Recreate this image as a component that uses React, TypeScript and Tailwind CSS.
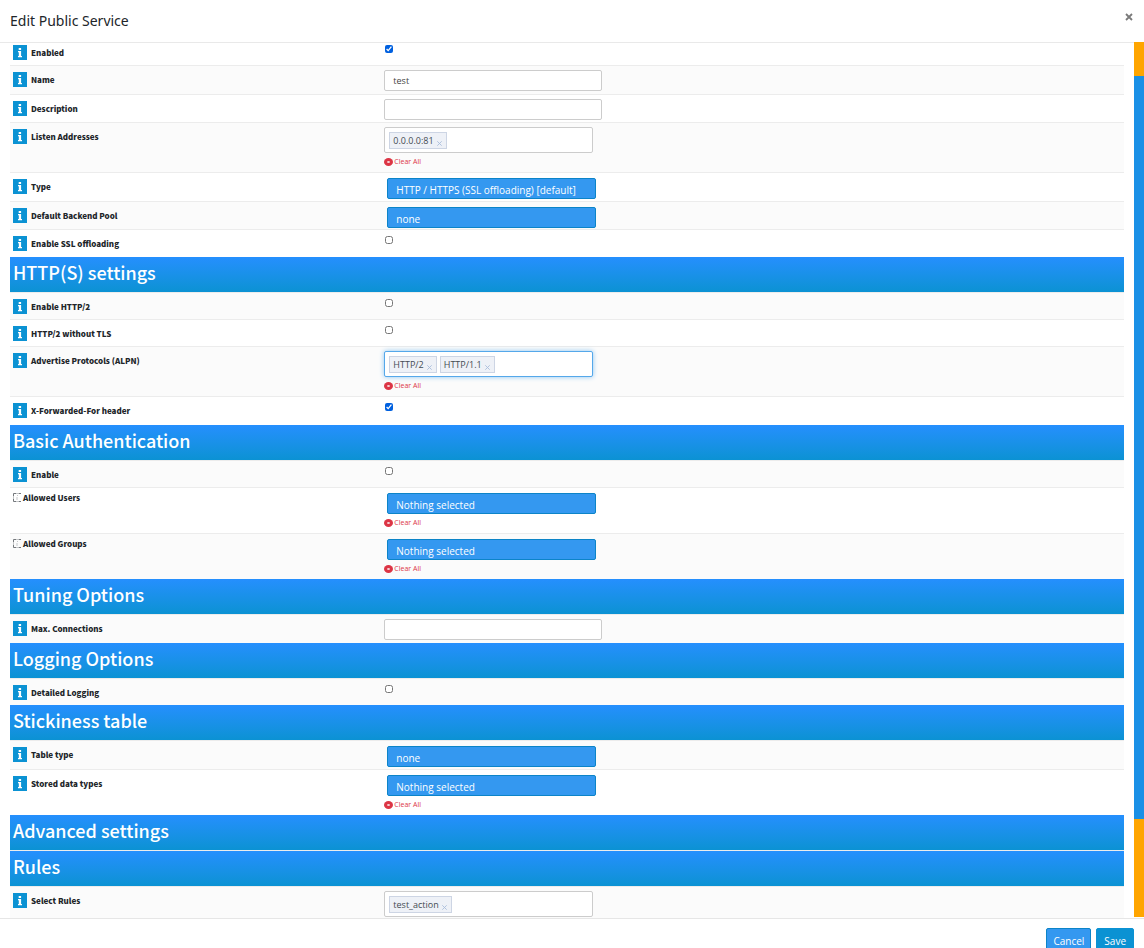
import React from "react";

const rowSizes = {
  xs: "min-h-[27px]",
  sm: "min-h-7",
  md: "min-h-[29px]",
  multi: "min-h-[46px]",
  lg: "min-h-[50px]",
};

function InfoBadge() {
  return (
    <svg viewBox="0 0 14 15" className="h-[15px] w-[14px] shrink-0" aria-hidden="true">
      <rect width="14" height="15" fill="#0b92d3" />
      <path fill="#fff" d="M5.700 3h2.400v2H5.700zM5 6h3.100v5H9v1.300H5V11h.8V7.300H5z" />
    </svg>
  );
}

function BrokenBadge() {
  return (
    <svg viewBox="0 0 8 9" className="mr-[2px] h-[9px] w-2 shrink-0" fill="none" aria-hidden="true">
      <path stroke="#74787c" d="M.5 3V.5H3M5.500 .5H8M.5 6v2.500H3M5.500 8.500H8" />
      <path stroke="#c4c6c8" d="M.5 3v3M3 .5h2.500M3 8.500h2.500M4.500 2v1M4 4v3" />
    </svg>
  );
}

type RowProps = {
  id: string;
  label: string;
  size: keyof typeof rowSizes;
  shade?: boolean;
  broken?: boolean;
  first?: boolean;
  children: React.ReactNode;
};

function Row({ id, label, size, shade, broken, first, children }: RowProps) {
  return (
    <div
      className={`grid shrink-0 grid-cols-[1fr_2fr] border-t border-[#ececec] ${rowSizes[size]} ${shade ? "bg-[#fbfbfb]" : "bg-white"} ${first ? "-mt-[5px]" : ""}`}
    >
      <div className={`flex items-start px-[3px] ${broken ? "pt-[5px]" : "gap-1 pt-1.5"}`}>
        {broken ? <BrokenBadge /> : <InfoBadge />}
        <label
          htmlFor={id}
          className={`font-['Noto_Sans_CJK_SC','Noto_Sans',sans-serif] text-[8px] font-black text-[#212529] ${broken ? "leading-[10px]" : "leading-[15px]"}`}
        >
          {label}
        </label>
      </div>
      <div className="px-[3px]">{children}</div>
    </div>
  );
}

function Section({ title, divided }: { title: string; divided?: boolean }) {
  return (
    <h2
      className={`h-[35px] shrink-0 bg-linear-to-b from-[#258ffe] to-[#0b92d3] bg-clip-padding pl-[3px] font-['Noto_Sans_CJK_SC','Noto_Sans',sans-serif] text-lg leading-[30px] font-medium text-white ${divided ? "box-content border-t border-[#ececec]" : ""}`}
    >
      {title}
    </h2>
  );
}

function Check({ id, checked }: { id: string; checked?: boolean }) {
  return (
    <input
      id={id}
      type="checkbox"
      defaultChecked={checked}
      className="mt-1.5 ml-px block size-2 accent-[#0060df]"
    />
  );
}

function TextField({ id, value }: { id: string; value?: string }) {
  return (
    <input
      id={id}
      type="text"
      defaultValue={value}
      className="mt-1 block h-[21px] w-[218px] rounded-[2px] border border-[#ccc] bg-white px-2 text-[9px] text-[#444]"
    />
  );
}

function Dropdown({ id, value }: { id: string; value: string }) {
  return (
    <select
      id={id}
      className="mt-[5px] ml-[3px] block h-[21px] w-[209px] appearance-none rounded-[2px] border border-[#0c84c8] bg-[#3498f0] px-2 pt-1 text-[10px] text-white"
    >
      <option>{value}</option>
    </select>
  );
}

function ClearAll() {
  return (
    <button type="button" className="mt-[3px] flex h-[11px] items-center gap-px text-[7px] leading-[11px] text-[#dc3545]">
      <svg viewBox="0 0 9 8" className="h-2 w-[9px]" aria-hidden="true">
        <ellipse cx="4.500" cy="4" rx="4.500" ry="4" fill="#dc3545" />
        <path d="M3.500 3l2 2M5.500 3l-2 2" stroke="#fff" strokeWidth="1" />
      </svg>
      Clear All
    </button>
  );
}

function Tokens({ id, values, focused }: { id: string; values: string[]; focused?: boolean }) {
  return (
    <div
      className={`mt-1 flex h-[26px] w-[209px] items-center gap-[3px] rounded-[2px] border bg-white px-1 ${focused ? "border-[#55a8ea] shadow-[0_0_5px_#8cc4f0]" : "border-[#ccc]"}`}
    >
      {values.map((v) => (
        <span
          key={v}
          className="flex h-[17px] items-center gap-[3px] border border-[#cdd5e4] bg-[#eef1f7] pr-1 pl-[3px] text-[9px] leading-[15px] text-[#444b52]"
        >
          {v}
          <button type="button" aria-label={`Remove ${v}`} className="pt-1.5">
            <svg viewBox="0 0 5 5" className="size-[5px]" stroke="#a9bddb" strokeWidth=".9" aria-hidden="true">
              <path d="M.3.3l4.400 4.400M4.700.3L.3 4.700" />
            </svg>
          </button>
        </span>
      ))}
      <input id={id} type="text" className="h-4 min-w-0 flex-1 bg-transparent text-[9px] outline-none" />
    </div>
  );
}

export default function App() {
  return (
    <div className="flex h-screen flex-col overflow-hidden bg-white font-['Open_Sans','Noto_Sans',sans-serif] text-[#212529]">
      <header className="flex h-[43px] shrink-0 items-start justify-between border-b border-[#e9e9e9] pr-[11px] pl-[10px]">
        <h1 className="pt-[11px] font-['Noto_Sans','Open_Sans',sans-serif] text-sm leading-5">Edit Public Service</h1>
        <button type="button" aria-label="Close" className="pt-[13px]">
          <svg viewBox="0 0 8 8" className="size-2" stroke="#7a7a7a" strokeWidth="1.8" aria-hidden="true">
            <path d="M1 1l6 6M7 1L1 7" />
          </svg>
        </button>
      </header>

      <div className="flex min-h-0 flex-1">
        <form id="service" className="mx-[10px] flex flex-1 flex-col overflow-hidden">
          <Row id="enabled" label="Enabled" size="xs" first><Check id="enabled" checked /></Row>
          <Row id="name" label="Name" size="md" shade><TextField id="name" value="test" /></Row>
          <Row id="description" label="Description" size="sm"><TextField id="description" /></Row>
          <Row id="listen" label="Listen Addresses" size="lg" shade>
            <Tokens id="listen" values={["0.0.0.0:81"]} />
            <ClearAll />
          </Row>
          <Row id="type" label="Type" size="md">
            <Dropdown id="type" value="HTTP / HTTPS (SSL offloading) [default]" />
          </Row>
          <Row id="pool" label="Default Backend Pool" size="sm" shade><Dropdown id="pool" value="none" /></Row>
          <Row id="ssl" label="Enable SSL offloading" size="sm"><Check id="ssl" /></Row>

          <Section title="HTTP(S) settings" />
          <Row id="http2" label="Enable HTTP/2" size="xs" shade><Check id="http2" /></Row>
          <Row id="notls" label="HTTP/2 without TLS" size="xs"><Check id="notls" /></Row>
          <Row id="alpn" label="Advertise Protocols (ALPN)" size="lg" shade>
            <Tokens id="alpn" values={["HTTP/2", "HTTP/1.1"]} focused />
            <ClearAll />
          </Row>
          <Row id="xff" label="X-Forwarded-For header" size="md"><Check id="xff" checked /></Row>

          <Section title="Basic Authentication" />
          <Row id="auth" label="Enable" size="xs" shade><Check id="auth" /></Row>
          <Row id="users" label="Allowed Users" size="multi" broken>
            <Dropdown id="users" value="Nothing selected" />
            <ClearAll />
          </Row>
          <Row id="groups" label="Allowed Groups" size="multi" broken shade>
            <Dropdown id="groups" value="Nothing selected" />
            <ClearAll />
          </Row>

          <Section title="Tuning Options" />
          <Row id="max" label="Max. Connections" size="md" shade><TextField id="max" /></Row>

          <Section title="Logging Options" />
          <Row id="logging" label="Detailed Logging" size="xs" shade><Check id="logging" /></Row>

          <Section title="Stickiness table" />
          <Row id="table" label="Table type" size="md" shade><Dropdown id="table" value="none" /></Row>
          <Row id="stored" label="Stored data types" size="multi">
            <Dropdown id="stored" value="Nothing selected" />
            <ClearAll />
          </Row>

          <Section title="Advanced settings" />
          <Section title="Rules" divided />
          <Row id="rules" label="Select Rules" size="lg" shade>
            <Tokens id="rules" values={["test_action"]} />
          </Row>
        </form>
        <div className="-mt-px mb-px flex w-[10px] flex-col bg-[#ffa500]" aria-hidden="true">
          <div className="flex-[34]" />
          <div className="flex-[743] bg-[#1a90e6]" />
          <div className="flex-[98]" />
        </div>
      </div>

      <footer className="flex h-[30px] shrink-0 items-start justify-end gap-[5px] border-t border-[#e6e6e6] pt-[9px] pr-[10px] text-[10px] text-white">
        <button type="button" className="h-6 shrink-0 rounded-[2px] border border-[#0c84c8] bg-[#3498f0] px-1.5 pt-[3px]">
          Cancel
        </button>
        <button type="submit" form="service" className="h-6 shrink-0 rounded-[2px] border border-[#0b92d3] bg-[#0b92d3] px-[7px] pt-[3px]">
          Save
        </button>
      </footer>
    </div>
  );
}
